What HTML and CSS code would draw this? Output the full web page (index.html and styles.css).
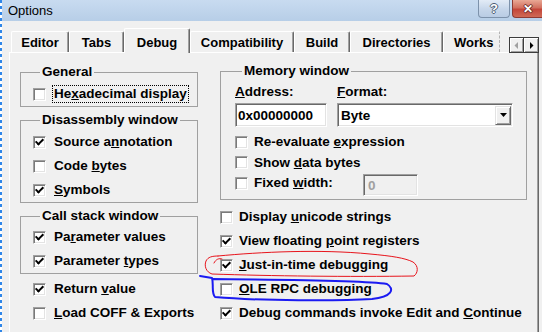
FILE: index.html
```html
<!DOCTYPE html>
<html lang="en">
<head>
<meta charset="utf-8">
<title>Options</title>
<link rel="stylesheet" href="styles.css">
</head>
<body>

<div class="window">
  <div class="titlebar">
    <span class="title">Options</span>
    <div class="caption">
      <span class="cap-btn help">?</span>
      <span class="cap-btn close">&#x2715;</span>
    </div>
  </div>

  <div class="tabstrip">
    <div class="tabs">
      <div class="tab t-editor">Editor</div>
      <div class="tab t-tabs">Tabs</div>
      <div class="tab t-debug selected">Debug</div>
      <div class="tab t-compat">Compatibility</div>
      <div class="tab t-build">Build</div>
      <div class="tab t-dirs">Directories</div>
      <div class="tab t-works">Works</div>
    </div>
    <div class="tabscroll">
      <span class="sbtn off"><svg width="5" height="7" viewBox="0 0 5 7"><polygon points="4,0 4,7 0.5,3.5"/></svg></span>
      <span class="sbtn"><svg width="5" height="7" viewBox="0 0 5 7"><polygon points="1,0 1,7 4.5,3.5"/></svg></span>
    </div>
  </div>

  <div class="panel">
    <!-- left column -->
    <div class="col col-left">
      <fieldset class="group g-general">
        <legend>General</legend>
        <div class="check"><span class="box"></span><span class="text focus">He<u>x</u>adecimal display</span></div>
      </fieldset>

      <fieldset class="group g-disasm">
        <legend>Disassembly window</legend>
        <div class="check"><span class="box on"></span><span class="text">Source a<u>n</u>notation</span></div>
        <div class="check"><span class="box"></span><span class="text">Code <u>b</u>ytes</span></div>
        <div class="check"><span class="box on"></span><span class="text"><u>S</u>ymbols</span></div>
      </fieldset>

      <fieldset class="group g-call">
        <legend>Call stack window</legend>
        <div class="check"><span class="box on"></span><span class="text">Pa<u>r</u>ameter values</span></div>
        <div class="check"><span class="box on"></span><span class="text">Parameter <u>t</u>ypes</span></div>
      </fieldset>

      <div class="loose loose-left">
        <div class="check"><span class="box on"></span><span class="text">Return <u>v</u>alue</span></div>
        <div class="check"><span class="box"></span><span class="text"><u>L</u>oad COFF &amp; Exports</span></div>
      </div>
    </div>

    <!-- right column -->
    <div class="col col-right">
      <fieldset class="group g-memory">
        <legend>Memory window</legend>
        <div class="fields">
          <div class="field f-addr">
            <span class="flabel"><u>A</u>ddress:</span>
            <div class="edit">0x00000000</div>
          </div>
          <div class="field f-fmt">
            <span class="flabel"><u>F</u>ormat:</span>
            <div class="combo">
              <span>Byte</span>
              <span class="drop"><svg width="7" height="4" viewBox="0 0 7 4"><polygon points="0,0 7,0 3.5,4"/></svg></span>
            </div>
          </div>
        </div>
        <div class="check mrow first"><span class="box"></span><span class="text">Re-evaluate <u>e</u>xpression</span></div>
        <div class="check mrow"><span class="box"></span><span class="text">Show <u>d</u>ata bytes</span></div>
        <div class="check mrow"><span class="box"></span><span class="text fixed-label">Fixed <u>w</u>idth:</span><div class="edit disabled">0</div></div>
      </fieldset>

      <div class="loose loose-right">
        <div class="check"><span class="box"></span><span class="text">Display <u>u</u>nicode strings</span></div>
        <div class="check"><span class="box on"></span><span class="text">View floating <u>p</u>oint registers</span></div>
        <div class="check"><span class="box on"></span><span class="text"><u>J</u>ust-in-time debugging</span></div>
        <div class="check"><span class="box"></span><span class="text"><u>O</u>LE RPC debugging</span></div>
        <div class="check"><span class="box on"></span><span class="text">Debug commands invoke Edit and <u>C</u>ontinue</span></div>
      </div>
    </div>
  </div>
</div>

<!-- hand drawn marks on top of the screenshot -->
<svg class="marks" width="542" height="332" viewBox="0 0 542 332">
  <path class="red" d="M214 263 C216 259 219 258 222 259 M218 256 C260 252 320 249 370 254 C392 256 405 258 413 262 C419 266 418 273 414 276 C350 277 270 276 212 274 C206 272 204 266 206 261 C208 257 212 256 218 256"/>
  <path class="blue" d="M200 276 L212 278 C214 285 211 292 215 297 C260 301 340 301 372 299 C392 297 395 289 387 284 C362 280 280 280 213 279"/>
</svg>

</body>
</html>
```

FILE: styles.css
```css
* { box-sizing: border-box; }

body {
  margin: 0;
  width: 542px;
  height: 332px;
  overflow: hidden;
  position: relative;
  /* selection marker on the left edge */
  background: repeating-linear-gradient(to bottom, #2f86e8 0 3px, #ffffff 3px 6px) left top / 2px 100% no-repeat, #f0f0f0;
  font-family: "Liberation Sans", Arial, sans-serif;
  color: #000;
}

.window {
  margin-left: 2px;
  height: 332px;
  background: #f0f0f0;
  display: flex;
  flex-direction: column;
}

/* title bar */
.titlebar {
  height: 21px;
  flex: none;
  display: flex;
  align-items: flex-start;
  background: linear-gradient(#c8dbf0, #b7cee7);
}
.title { font-size: 13px; line-height: 21px; padding-left: 6px; }
.caption { margin-left: auto; display: flex; gap: 2px; }
.cap-btn {
  height: 18px;
  display: flex; align-items: center; justify-content: center;
  color: #fff; font-weight: bold;
  border: 1px solid #7d92ab; border-top: none;
  border-radius: 0 0 4px 4px;
}
.help {
  width: 32px; font-size: 13px;
  background: linear-gradient(#e2ebf6, #c6d6ea 55%, #b9cce4);
  text-shadow: -1px 0 #4d5d73, 1px 0 #4d5d73, 0 -1px #4d5d73, 0 1px #4d5d73;
}
.close {
  width: 30px; font-size: 12px;
  border-color: #8e3b33; border-right: none;
  border-radius: 0 0 0 4px;
  background: linear-gradient(#e9a895, #d2705f 45%, #c4463a 55%, #cf6a55);
  text-shadow: -1px 0 #6b2a24, 1px 0 #6b2a24, 0 -1px #6b2a24, 0 1px #6b2a24;
}

/* tabs */
.tabstrip {
  flex: none;
  display: flex;
  height: 25px;
  margin: 7px 0 -1px 9px;
  position: relative;
  z-index: 1;
}
.tabs { display: flex; align-items: flex-end; width: 489px; overflow: hidden; }
.tab {
  flex: none;
  height: 21px;
  margin-bottom: 1px;
  display: flex; align-items: center; justify-content: center;
  font-size: 13px; font-weight: bold;
  background: #f0f0f0;
  border: 1px solid #fff; border-bottom: none; border-right-color: #696969;
  box-shadow: inset -1px 0 0 #a0a0a0;
  border-radius: 2px 2px 0 0;
}
.tab.selected { height: 25px; margin-bottom: 0; padding-top: 2px; }
.t-editor { width: 58px; }
.t-tabs { width: 55px; }
.t-debug { width: 66px; }
.t-compat { width: 104px; }
.t-build { width: 56px; }
.t-dirs { width: 93px; }
/* last tab is cut by the scroll buttons: ragged edge */
.t-works {
  width: 57px;
  justify-content: flex-start;
  padding-left: 10px;
  border-right: 1px dashed #b4b4b4;
  box-shadow: none;
  border-radius: 2px 0 0 0;
}

.tabscroll { display: flex; margin: 9px 0 0 9px; height: 16px; }
.sbtn {
  width: 15px; height: 16px;
  display: flex; align-items: center; justify-content: center;
  background: #f0f0f0;
  border: 1px solid #3c3c3c;
  box-shadow: inset 1px 1px 0 #fff, inset -1px -1px 0 #a0a0a0;
}
.sbtn + .sbtn { border-left: none; }
.sbtn svg { fill: #000; }
.sbtn.off svg { fill: #a0a0a0; }

/* tab page */
.panel {
  flex: 1;
  width: 530px;
  margin-left: 7px;
  display: flex;
  gap: 22px;
  padding-left: 10px;
  background: #f0f0f0;
  border-top: 1px solid #fff;
  border-left: 1px solid #fff;
  border-right: 1px solid #696969;
  box-shadow: inset -1px 0 0 #a0a0a0;
}
.col-left { width: 178px; padding-top: 11px; }
.col-right { width: 307px; padding-top: 10px; }

.group {
  margin: 0;
  padding: 0 12px;
  min-width: 0;
  border: 1px solid #a0a0a0;
}
.group legend {
  padding: 0 2px;
  margin-left: 7px;
  font-size: 13.5px; font-weight: bold;
  line-height: 16px;
}
.g-general { padding-top: 2px; }
.g-disasm { padding-top: 2px; margin-top: 5px; }
.g-call { padding-top: 1px; margin-top: 5px; }
.g-memory { padding: 0 13px 5.5px 14px; }

/* check boxes */
.check {
  display: flex;
  align-items: center;
  height: 24px;
  gap: 6px;
  font-size: 13.5px; font-weight: bold;
  white-space: nowrap;
}
.check .text { padding: 1px 2px; line-height: 16px; }
.check .text.focus { padding: 0 1px; border: 1px dotted #000; }
.col-right .check { gap: 4px; }

.box {
  flex: none;
  width: 13px; height: 13px;
  display: flex; align-items: center; justify-content: center;
  background: #fff;
  border: 1px solid; border-color: #a0a0a0 #fff #fff #a0a0a0;
  box-shadow: inset 1px 1px 0 #7a7a7a, inset -1px -1px 0 #e3e3e3;
}
.box.on::after {
  content: "";
  width: 3px; height: 6px;
  margin-top: -2px;
  border: solid #000; border-width: 0 2px 2px 0;
  transform: rotate(45deg);
}

.loose-left { margin-top: 3px; padding-left: 13px; }
.loose-right { margin-top: 5px; }

/* memory window fields */
.fields { display: flex; gap: 10px; margin-top: 5px; }
.f-addr { width: 92px; }
.f-fmt { flex: 1; }
.flabel { display: block; font-size: 13.5px; font-weight: bold; line-height: 16px; }

.edit, .combo {
  margin-top: 3px;
  height: 24px;
  display: flex; align-items: center;
  padding-left: 2px;
  background: #fff;
  font-size: 13.5px; font-weight: bold;
  border: 1px solid; border-color: #a0a0a0 #fff #fff #a0a0a0;
  box-shadow: inset 1px 1px 0 #696969, inset -1px -1px 0 #e3e3e3;
}
.combo { padding-left: 3px; }
.drop {
  margin-left: auto; margin-right: 1px;
  width: 16px; height: 19px;
  display: flex; align-items: center; justify-content: center;
  background: #f0f0f0;
  border: 1px solid; border-color: #e3e3e3 #696969 #696969 #e3e3e3;
  box-shadow: inset 1px 1px 0 #fff, inset -1px -1px 0 #a0a0a0;
}

.mrow { height: 20.5px; }
.mrow.first { margin-top: 5px; }
.fixed-label { width: 107px; }
.edit.disabled {
  width: 55px; height: 22px;
  margin-top: 1px;
  align-self: flex-start;
  padding-left: 4px;
  background: #f0f0f0;
  color: #a0a0a0;
}

/* annotation strokes */
.marks { position: absolute; left: 0; top: 0; pointer-events: none; }
.marks path { fill: none; stroke-linecap: round; stroke-linejoin: round; }
.marks .red { stroke: #e8141c; stroke-width: 1; }
.marks .blue { stroke: #1b1bf2; stroke-width: 2; }
```
